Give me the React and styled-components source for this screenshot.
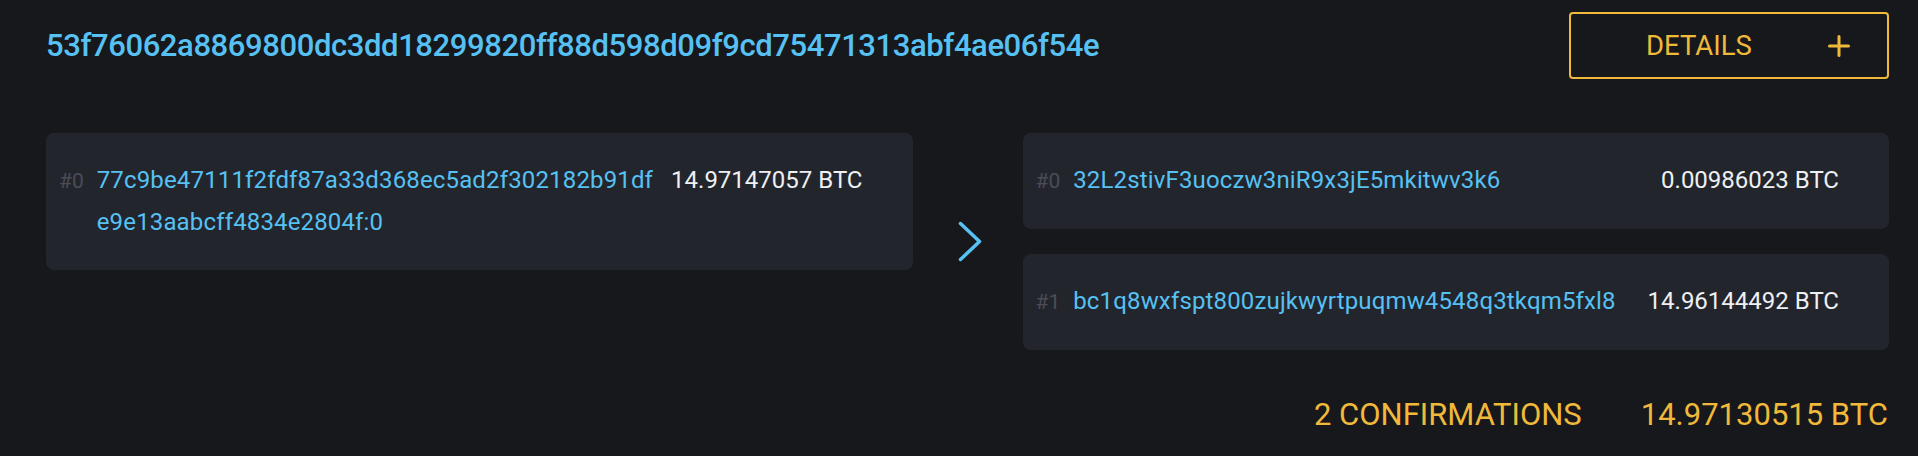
import React from "react";
import styled, { createGlobalStyle } from "styled-components";

const Global = createGlobalStyle`
  html, body {
    margin: 0;
    padding: 0;
    background: #17181c;
  }
  body {
    font-family: Roboto, "Liberation Sans", sans-serif;
    color: #eaecef;
  }
`;

const Page = styled.div`
  padding: 12px 29px 0 46px;
  min-height: 456px;
  box-sizing: border-box;
`;

const Header = styled.div`
  display: flex;
  align-items: center;
  justify-content: space-between;
`;

const TxId = styled.div`
  font-size: 31px;
  line-height: 31px;
  font-weight: 500;
  color: #56c1f2;
  letter-spacing: -0.4px;
`;

const DetailsButton = styled.button`
  box-sizing: border-box;
  width: 320px;
  height: 67px;
  border: 2px solid #f0b93a;
  border-radius: 4px;
  background: transparent;
  color: #f0b93a;
  display: flex;
  align-items: center;
  justify-content: space-between;
  padding: 0 37px 0 75px;
  font-family: Roboto, "Liberation Sans", sans-serif;
  font-size: 27.5px;
  font-weight: 400;
  cursor: pointer;
`;

const Flow = styled.div`
  margin-top: 54px;
  display: grid;
  grid-template-columns: 1fr 110px 1fr;
  align-items: start;
`;

const Column = styled.div`
  display: flex;
  flex-direction: column;
  gap: 25px;
`;

const Arrow = styled.div`
  align-self: center;
  display: flex;
  justify-content: center;
  padding-left: 5px;
`;

const Card = styled.div`
  background: #23252d;
  border-radius: 8px;
  padding: 26px 50px 27px 13px;
  display: flex;
  align-items: baseline;
  line-height: 42px;
`;

const Index = styled.span`
  font-size: 21px;
  color: #4a4d56;
  margin-right: 13px;
  white-space: nowrap;
`;

const Address = styled.span`
  flex: 1;
  min-width: 0;
  font-size: 24px;
  letter-spacing: 0.15px;
  color: #56c1f2;
  word-break: break-all;
`;

const Amount = styled.span`
  margin-left: 12px;
  font-size: 24px;
  color: #eef0f2;
  white-space: nowrap;
  text-align: right;
`;

const Footer = styled.div`
  margin-top: 49px;
  display: flex;
  justify-content: flex-end;
  gap: 59px;
  padding-right: 1px;
  font-size: 31px;
  line-height: 31px;
  color: #f0b93a;
`;

const Plus = () => (
  <svg width="22" height="22" viewBox="0 0 22 22" fill="none">
    <path d="M11 1.5v19M1.5 11h19" stroke="#f0b93a" strokeWidth="3" strokeLinecap="round" />
  </svg>
);

const Chevron = () => (
  <svg width="25" height="42" viewBox="0 0 25 42" fill="none">
    <polyline
      points="2.5,2.5 21.5,20.5 2.5,38.5"
      stroke="#56c1f2"
      strokeWidth="3.5"
      strokeLinecap="round"
      strokeLinejoin="round"
    />
  </svg>
);

const inputs = [
  {
    idx: "#0",
    addr: "77c9be47111f2fdf87a33d368ec5ad2f302182b91dfe9e13aabcff4834e2804f:0",
    amount: "14.97147057 BTC",
  },
];

const outputs = [
  { idx: "#0", addr: "32L2stivF3uoczw3niR9x3jE5mkitwv3k6", amount: "0.00986023 BTC" },
  { idx: "#1", addr: "bc1q8wxfspt800zujkwyrtpuqmw4548q3tkqm5fxl8", amount: "14.96144492 BTC" },
];

const Row = ({ idx, addr, amount }) => (
  <Card>
    <Index>{idx}</Index>
    <Address>{addr}</Address>
    <Amount>{amount}</Amount>
  </Card>
);

export default function App() {
  return (
    <>
      <Global />
      <Page>
        <Header>
          <TxId>53f76062a8869800dc3dd18299820ff88d598d09f9cd75471313abf4ae06f54e</TxId>
          <DetailsButton>
            <span>DETAILS</span>
            <Plus />
          </DetailsButton>
        </Header>
        <Flow>
          <Column>
            {inputs.map((r) => (
              <Row key={r.idx} {...r} />
            ))}
          </Column>
          <Arrow>
            <Chevron />
          </Arrow>
          <Column>
            {outputs.map((r) => (
              <Row key={r.idx} {...r} />
            ))}
          </Column>
        </Flow>
        <Footer>
          <span>2 CONFIRMATIONS</span>
          <span>14.97130515 BTC</span>
        </Footer>
      </Page>
    </>
  );
}
